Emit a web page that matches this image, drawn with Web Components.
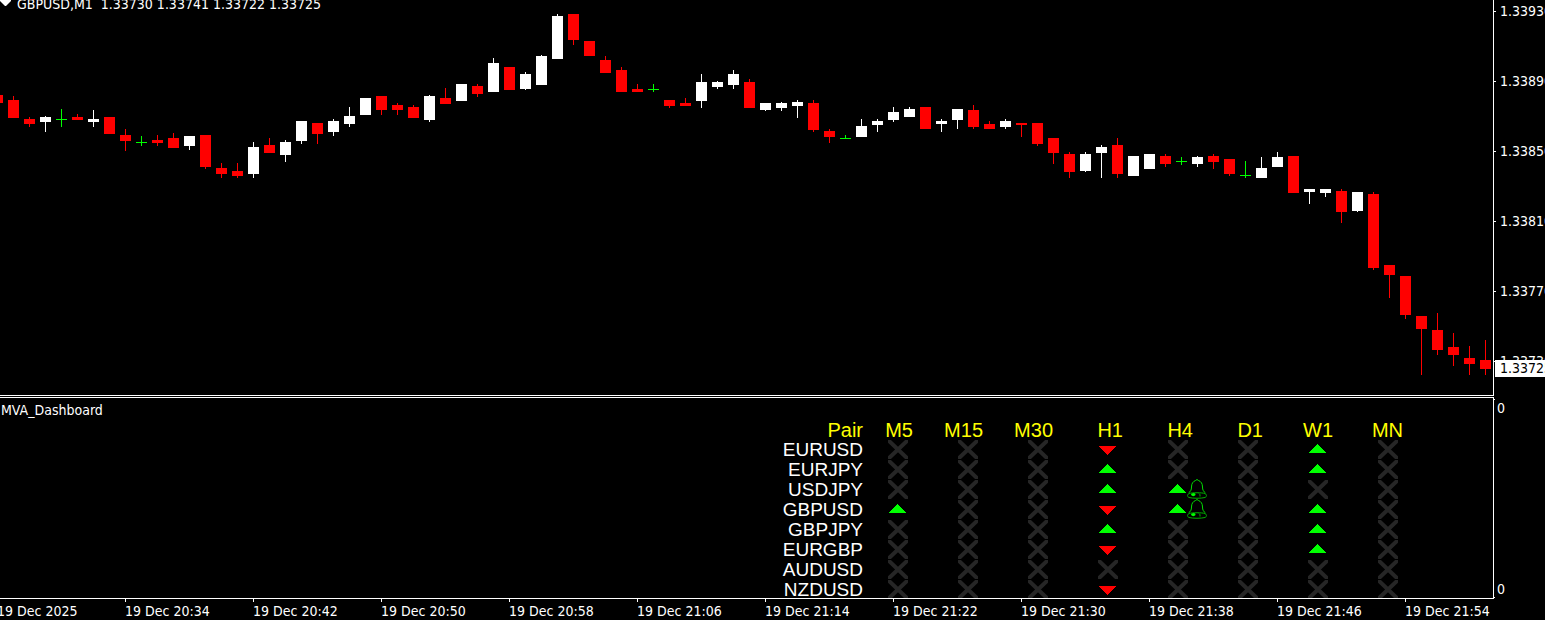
<!DOCTYPE html>
<html lang="en">
<head>
<meta charset="utf-8">
<title>GBPUSD,M1</title>
<style>
    html, body { height: 100%; }
    body {
        margin: 0;
        background: #000;
        color: #fff;
        font: 14px/20px "DejaVu Sans Condensed", "Noto Sans", sans-serif;
        overflow: hidden;
    }
</style>
</head>
<body>
<trading-terminal></trading-terminal>

<script>
// [high, body top, body bottom, low, colour], oldest first, one candle every 16px
const CANDLES = [
    [95, 95, 103, 103, 'r'], [96, 100, 118, 118, 'r'], [117, 119, 124, 127, 'r'], [116, 117, 122, 132, 'w'],
    [109, 119, 120, 127, 'g'], [114, 117, 120, 120, 'r'], [110, 119, 122, 127, 'w'], [117, 117, 134, 134, 'r'],
    [129, 135, 141, 151, 'r'], [136, 142, 143, 146, 'g'], [135, 140, 143, 146, 'r'], [133, 138, 148, 148, 'r'],
    [136, 136, 146, 150, 'w'], [135, 135, 167, 169, 'r'], [163, 168, 174, 178, 'r'], [163, 171, 176, 178, 'r'],
    [142, 147, 174, 178, 'w'], [138, 145, 153, 153, 'r'], [140, 142, 155, 162, 'w'], [121, 121, 141, 144, 'w'],
    [123, 123, 134, 144, 'r'], [119, 121, 132, 136, 'w'], [107, 116, 124, 127, 'w'], [98, 98, 115, 115, 'w'],
    [96, 96, 110, 115, 'r'], [103, 105, 110, 115, 'r'], [105, 107, 118, 118, 'r'], [95, 96, 120, 122, 'w'],
    [88, 98, 104, 104, 'r'], [84, 84, 101, 101, 'w'], [84, 86, 94, 97, 'r'], [58, 63, 92, 92, 'w'],
    [67, 67, 90, 90, 'r'], [72, 74, 89, 90, 'w'], [55, 56, 85, 85, 'w'], [14, 16, 59, 59, 'w'],
    [14, 14, 40, 45, 'r'], [41, 41, 56, 56, 'r'], [56, 60, 73, 73, 'r'], [67, 70, 92, 92, 'r'],
    [84, 89, 92, 92, 'r'], [84, 89, 90, 92, 'g'], [100, 100, 106, 108, 'r'], [98, 103, 106, 106, 'r'],
    [74, 82, 101, 108, 'w'], [81, 82, 87, 89, 'w'], [70, 74, 85, 89, 'w'], [79, 82, 108, 108, 'r'],
    [103, 103, 110, 111, 'w'], [102, 103, 108, 111, 'w'], [100, 102, 106, 118, 'w'], [100, 103, 130, 132, 'r'],
    [129, 131, 137, 143, 'r'], [135, 138, 139, 139, 'g'], [119, 126, 137, 137, 'w'], [119, 121, 125, 132, 'w'],
    [107, 112, 120, 122, 'w'], [107, 109, 117, 117, 'w'], [107, 107, 129, 129, 'r'], [119, 121, 124, 132, 'w'],
    [109, 109, 120, 129, 'w'], [105, 110, 127, 129, 'r'], [121, 124, 129, 129, 'r'], [119, 121, 127, 129, 'w'],
    [123, 123, 125, 137, 'r'], [123, 123, 144, 146, 'r'], [138, 138, 153, 164, 'r'], [152, 154, 172, 178, 'r'],
    [152, 154, 171, 172, 'w'], [145, 147, 153, 178, 'w'], [138, 145, 174, 178, 'r'], [156, 156, 176, 176, 'w'],
    [154, 154, 169, 169, 'w'], [154, 156, 164, 167, 'r'], [157, 161, 162, 165, 'g'], [156, 157, 164, 167, 'w'],
    [154, 156, 162, 169, 'r'], [159, 159, 174, 176, 'r'], [161, 175, 176, 178, 'g'], [157, 168, 178, 178, 'w'],
    [152, 157, 167, 167, 'w'], [156, 156, 193, 193, 'r'], [189, 189, 192, 204, 'w'], [189, 189, 193, 197, 'w'],
    [189, 191, 212, 223, 'r'], [192, 192, 211, 212, 'w'], [192, 194, 268, 270, 'r'], [265, 265, 275, 298, 'r'],
    [276, 276, 315, 319, 'r'], [316, 316, 329, 375, 'r'], [313, 330, 350, 355, 'r'], [333, 347, 355, 366, 'r'],
    [346, 358, 364, 375, 'r'], [340, 360, 369, 375, 'r']
];
const COLORS = { r: '#f00', w: '#fff', g: '#0f0' };

const TIMES = ['2025', '20:34', '20:42', '20:50', '20:58', '21:06', '21:14', '21:22', '21:30', '21:38', '21:46', '21:54'];
const PRICES = ['1.33930', '1.33890', '1.33850', '1.33810', '1.33770', '1.33730'];

const FRAMES = ['M5', 'M15', 'M30', 'H1', 'H4', 'D1', 'W1', 'MN'];
// x = no signal, u = up, d = down, b = up with alert
const SIGNALS = [
    ['EURUSD', 'xxxdxxux'],
    ['EURJPY', 'xxxuxxux'],
    ['USDJPY', 'xxxubxxx'],
    ['GBPUSD', 'uxxdbxux'],
    ['GBPJPY', 'xxxuxxux'],
    ['EURGBP', 'xxxdxxux'],
    ['AUDUSD', 'xxxxxxxx'],
    ['NZDUSD', 'xxxdxxxx']
];

class CandleChart extends HTMLElement {
    constructor() {
        super();
        this.attachShadow({ mode: 'open' });
        const candles = CANDLES.map(([high, top, bottom, low, kind], i) => {
            const x = i * 16 - 3;
            return `<path fill="${COLORS[kind]}" d="M${x} ${high}h1V${low}h-1zM${x - 5} ${top}h11V${bottom}h-11z"/>`;
        }).join('');
        this.shadowRoot.innerHTML = `
            <style>
                :host { display: block; position: relative; overflow: hidden; }
                svg { display: block; width: 100%; height: 100%; }
                .title {
                    position: absolute;
                    top: -6px;
                    left: 0;
                    display: flex;
                    gap: 6px;
                    white-space: pre;
                }
                .title svg { width: 11px; height: 20px; }
            </style>
            <svg viewBox="0 0 1493 395" preserveAspectRatio="xMaxYMin slice" shape-rendering="crispEdges" aria-hidden="true">${candles}</svg>
            <div class="title">
                <svg viewBox="0 0 11 20" aria-hidden="true"><path fill="#fff" d="M0 6h11v1L6 12H5L0 7z"/></svg>
                <slot></slot>
            </div>
        `;
    }
}
customElements.define('candle-chart', CandleChart);

class PriceScale extends HTMLElement {
    constructor() {
        super();
        this.attachShadow({ mode: 'open' });
        this.shadowRoot.innerHTML = `
            <style>
                :host {
                    display: flex;
                    flex-direction: column;
                    justify-content: space-between;
                    position: relative;
                    box-sizing: border-box;
                    padding: 1px 0 25px;
                    overflow: hidden;
                }
                .label { display: flex; align-items: center; gap: 4px; }
                .label::before { content: ""; flex: none; width: 2px; height: 1px; background: #fff; }
                .current {
                    position: absolute;
                    left: 1px;
                    right: 0;
                    bottom: 19px;
                    padding-left: 5px;
                    background: #fff;
                    color: #000;
                    line-height: 17px;
                }
            </style>
            ${PRICES.map(p => `<div class="label">${p}</div>`).join('')}
            <div class="current"><slot></slot></div>
        `;
    }
}
customElements.define('price-scale', PriceScale);

class SignalIcon extends HTMLElement {
    constructor() {
        super();
        this.attachShadow({ mode: 'open' });
    }

    connectedCallback() {
        const kind = this.getAttribute('kind');
        const shapes = {
            x: '<path stroke="#262626" stroke-width="4" d="M-1-1L21 20M21-1L-1 20"/>',
            u: '<path fill="#0f0" shape-rendering="crispEdges" d="M9 4L18 13H0z"/>',
            d: '<path fill="#f00" shape-rendering="crispEdges" d="M0 6h18.500L9.500 15H9z"/>'
        };
        const bell = `
            <svg class="bell" viewBox="0 0 20 20" fill="none" stroke="#00e000">
                <path d="M8.500 1.500Q10-.5 11.500 1.500M8.500 1.500C6 2.500 4.500 4.500 4.500 8C4.500 11 3.500 12.500 1.500 14M11.500 1.500C14 2.500 15.500 4.500 15.500 8C15.500 11 16.500 12.500 18.500 14"/>
                <path d="M2 14.500C5 13.500 15 13.500 18 14.500C20 16 20 17.500 18 18.500C14 19.500 6 19.500 2 18.500C0 17.500 0 16 2 14.500z" stroke="#00b000"/>
                <path d="M4 16Q4 14 7 14Q9 14.500 8.500 16Q7.500 17.500 5.500 17z" fill="#0f0" stroke="none"/>
                <path d="M12 14.500Q13.500 15.500 13 17.500" stroke="#00b000"/>
            </svg>`;
        this.shadowRoot.innerHTML = `
            <style>
                :host { display: block; position: relative; width: 20px; height: 20px; }
                svg { display: block; width: 20px; height: 19px; overflow: hidden; }
                .bell { position: absolute; left: 19px; top: -1px; height: 20px; }
            </style>
            <svg viewBox="0 0 20 19" aria-hidden="true">${shapes[kind === 'b' ? 'u' : kind]}</svg>
            ${kind === 'b' ? bell : ''}
        `;
    }
}
customElements.define('signal-icon', SignalIcon);

class SignalDashboard extends HTMLElement {
    constructor() {
        super();
        this.attachShadow({ mode: 'open' });
        this.shadowRoot.innerHTML = `
            <style>
                :host { display: block; overflow: hidden; }
                .name { height: 22px; padding: 2px 1px 0; box-sizing: border-box; }
                table {
                    width: 640px;
                    margin: 0 89px 0 auto;
                    table-layout: fixed;
                    border-collapse: collapse;
                    font: 19px/20px "Liberation Sans", Arial, sans-serif;
                }
                th, td { width: 70px; height: 20px; padding: 0; text-align: right; font-weight: normal; box-sizing: border-box; }
                th { padding-right: 1px; }
                thead th { color: #ff0; font-size: 20px; }
                th:first-child { width: 100px; }
                th:nth-child(2) { width: 50px; }
                signal-icon { margin: 0 6px 0 auto; }
            </style>
            <div class="name"><slot></slot></div>
            <table>
                <thead><tr><th>Pair</th>${FRAMES.map(f => `<th>${f}</th>`).join('')}</tr></thead>
                <tbody>
                    ${SIGNALS.map(([pair, marks]) => `<tr><th>${pair}</th>${[...marks].map(m => `<td><signal-icon kind="${m}"></signal-icon></td>`).join('')}</tr>`).join('')}
                </tbody>
            </table>
        `;
    }
}
customElements.define('signal-dashboard', SignalDashboard);

class LevelScale extends HTMLElement {
    constructor() {
        super();
        this.attachShadow({ mode: 'open' });
        this.shadowRoot.innerHTML = `
            <style>
                :host { display: flex; flex-direction: column; justify-content: space-between; padding-top: 1px; }
                div { display: flex; gap: 2px; }
                div::before { content: ""; width: 1px; height: 1px; margin: 1px 0; background: #fff; }
                div:last-child::before { align-self: flex-end; }
            </style>
            <div>0</div>
            <div>0</div>
        `;
    }
}
customElements.define('level-scale', LevelScale);

class TimeScale extends HTMLElement {
    constructor() {
        super();
        this.attachShadow({ mode: 'open' });
        this.shadowRoot.innerHTML = `
            <style>
                :host { display: flex; margin-left: -3px; overflow: hidden; white-space: nowrap; }
                div { flex: none; width: 128px; height: 21px; line-height: 18px; }
                div::before { content: ""; display: block; width: 1px; height: 3px; background: #fff; }
            </style>
            ${TIMES.map(t => `<div>19 Dec ${t}</div>`).join('')}
        `;
    }
}
customElements.define('time-scale', TimeScale);

class TradingTerminal extends HTMLElement {
    constructor() {
        super();
        this.attachShadow({ mode: 'open' });
        this.shadowRoot.innerHTML = `
            <style>
                :host {
                    display: grid;
                    grid-template-columns: minmax(0, 1fr) 51px;
                    grid-template-rows: minmax(0, 1fr) 202px 21px;
                    height: 100%;
                }
                candle-chart, signal-dashboard { border: solid #fff; }
                candle-chart { border-width: 0 1px 1px 0; }
                candle-chart, price-scale { margin-bottom: 1px; }
                signal-dashboard { border-width: 1px 1px 1px 0; }
                time-scale { grid-column: 1 / -1; }
            </style>
            <candle-chart>GBPUSD,M1  1.33730 1.33741 1.33722 1.33725</candle-chart>
            <price-scale>1.33725</price-scale>
            <signal-dashboard>MVA_Dashboard</signal-dashboard>
            <level-scale></level-scale>
            <time-scale></time-scale>
        `;
    }
}
customElements.define('trading-terminal', TradingTerminal);
</script>
</body>
</html>
